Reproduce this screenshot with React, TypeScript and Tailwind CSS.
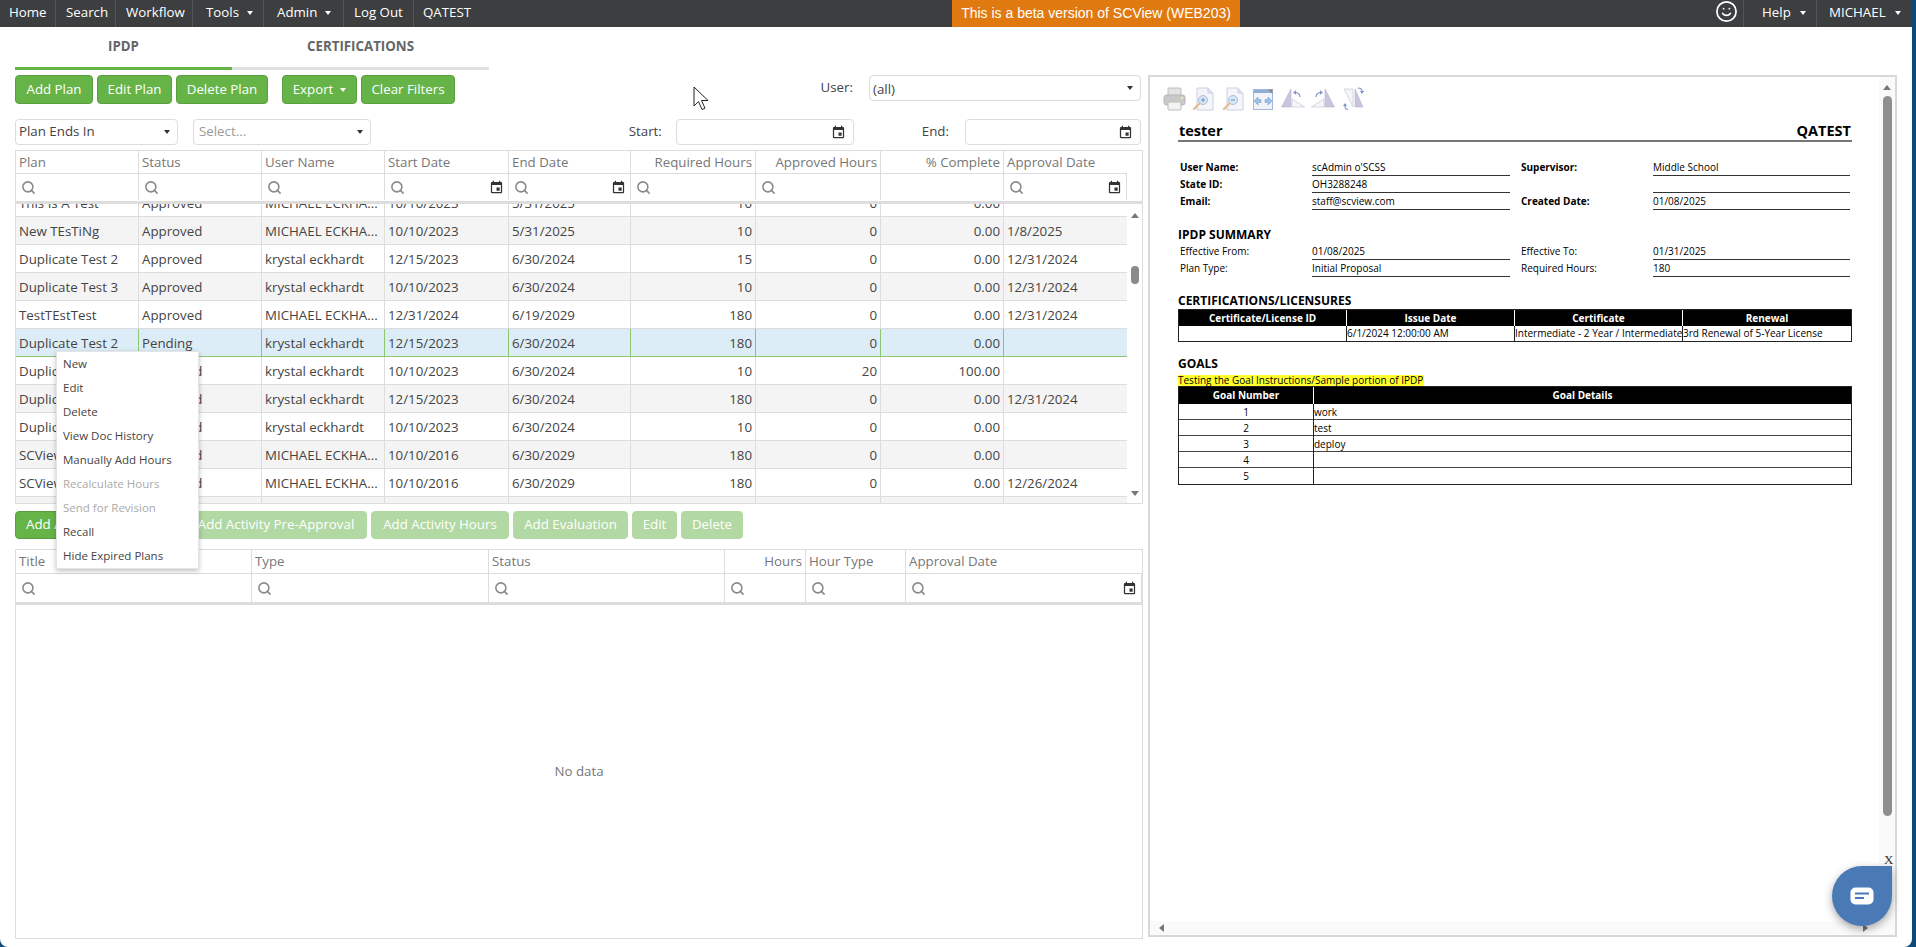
import { Search, Smile } from "lucide-react"
import { MdEvent } from "react-icons/md"

const planCols = "grid grid-cols-[123px_123px_123px_124px_122px_125px_125px_123px_123px]"
const activityCols = "grid grid-cols-[236px_237px_236px_81px_100px_1fr]"
const docCols = "grid grid-cols-[134px_198px_9px_134px_197px]"

type Row = {
  plan: string
  status: string
  user: string
  start: string
  end: string
  required: string
  approved: string
  pct: string
  date: string
}

const mk = "MICHAEL ECKHA..."
const ke = "krystal eckhardt"

const rows: Row[] = [
  { plan: "This Is A Test", status: "Approved", user: mk, start: "10/10/2023", end: "5/31/2025", required: "10", approved: "0", pct: "0.00", date: "" },
  { plan: "New TEsTiNg", status: "Approved", user: mk, start: "10/10/2023", end: "5/31/2025", required: "10", approved: "0", pct: "0.00", date: "1/8/2025" },
  { plan: "Duplicate Test 2", status: "Approved", user: ke, start: "12/15/2023", end: "6/30/2024", required: "15", approved: "0", pct: "0.00", date: "12/31/2024" },
  { plan: "Duplicate Test 3", status: "Approved", user: ke, start: "10/10/2023", end: "6/30/2024", required: "10", approved: "0", pct: "0.00", date: "12/31/2024" },
  { plan: "TestTEstTest", status: "Approved", user: mk, start: "12/31/2024", end: "6/19/2029", required: "180", approved: "0", pct: "0.00", date: "12/31/2024" },
  { plan: "Duplicate Test 2", status: "Pending", user: ke, start: "12/15/2023", end: "6/30/2024", required: "180", approved: "0", pct: "0.00", date: "" },
  { plan: "Duplicate Test 3", status: "Approved", user: ke, start: "10/10/2023", end: "6/30/2024", required: "10", approved: "20", pct: "100.00", date: "" },
  { plan: "Duplicate Test 2", status: "Approved", user: ke, start: "12/15/2023", end: "6/30/2024", required: "180", approved: "0", pct: "0.00", date: "12/31/2024" },
  { plan: "Duplicate Test 3", status: "Approved", user: ke, start: "10/10/2023", end: "6/30/2024", required: "10", approved: "0", pct: "0.00", date: "" },
  { plan: "SCView Test", status: "Approved", user: mk, start: "10/10/2016", end: "6/30/2029", required: "180", approved: "0", pct: "0.00", date: "" },
  { plan: "SCView Test", status: "Approved", user: mk, start: "10/10/2016", end: "6/30/2029", required: "180", approved: "0", pct: "0.00", date: "12/26/2024" },
  { plan: "", status: "", user: "", start: "", end: "", required: "", approved: "", pct: "", date: "" },
]

const menuItems = [
  { label: "New" },
  { label: "Edit" },
  { label: "Delete" },
  { label: "View Doc History" },
  { label: "Manually Add Hours" },
  { label: "Recalculate Hours", disabled: true },
  { label: "Send for Revision", disabled: true },
  { label: "Recall" },
  { label: "Hide Expired Plans" },
]

function Caret({ dark }: { dark?: boolean }) {
  return (
    <span
      className={`inline-block border-x-[3.5px] border-t-[4px] border-x-transparent ${
        dark ? "border-t-[#333]" : "border-t-white"
      }`}
    />
  )
}

function NavItem({ label, width, caret }: { label: string; width: string; caret?: boolean }) {
  return (
    <div className={`flex h-full items-center gap-[8px] border-r border-[#555] pb-[2px] ${width}`}>
      <span>{label}</span>
      {caret && <Caret />}
    </div>
  )
}

function GreenButton({ label, width, caret, faded }: { label: string; width: string; caret?: boolean; faded?: boolean }) {
  return (
    <button
      className={`flex items-center justify-center gap-[7px] rounded-[4px] border text-white ${width} ${
        faded ? "h-[28px] border-[#b2d8a3] bg-[#b2d8a3]" : "h-[29px] border-[#5a9f3e] bg-[#66b447]"
      }`}
    >
      {label}
      {caret && <Caret />}
    </button>
  )
}

function Box({ width, height, text, muted, icon, extra }: { width: string; height: string; text?: string; muted?: boolean; icon?: "caret" | "date"; extra?: string }) {
  return (
    <div className={`flex items-center justify-between rounded-[4px] border border-[#dcdcdc] pl-[3px] pr-[7px] ${width} ${height}`}>
      <span className={`${muted ? "pl-[2px] text-[#999]" : "text-[#444]"} ${extra ?? ""}`}>{text}</span>
      {icon === "caret" && <Caret dark />}
      {icon === "date" && <MdEvent className="text-[15px] text-[#333]" />}
    </div>
  )
}

function FilterCell({ date, empty }: { date?: boolean; empty?: boolean }) {
  return (
    <div className="flex h-full items-center justify-between border-r border-[#ddd] pl-[5px] pr-[4px]">
      {!empty && <Search size={15} strokeWidth={2.5} className="text-[#8a8a8a]" />}
      {date && <MdEvent className="text-[15px] text-[#333]" />}
    </div>
  )
}

function HeadCell({ label, right, last }: { label: string; right?: boolean; last?: boolean }) {
  return (
    <div className={`truncate px-[3px] leading-[23px] text-[#777] ${last ? "" : "border-r border-[#ddd]"} ${right ? "text-right" : ""}`}>
      {label}
    </div>
  )
}

function PlanRow({ row, index }: { row: Row; index: number }) {
  const selected = row.status === "Pending"
  const bg = selected ? "bg-[#dcedf7]" : index % 2 === 1 ? "bg-[#f4f4f4]" : "bg-white"
  const line = selected ? "border-[#8cc66f]" : "border-[#ddd]"
  const cell = `truncate h-full px-[3px] leading-[28px] border-r ${line}`
  return (
    <div className={`${planCols} h-[28px] border-b text-[#444] ${bg} ${selected ? "border-b-[#8cc66f]" : "border-b-[#ddd]"}`}>
      <div className={cell}>{row.plan}</div>
      <div className={cell}>{row.status}</div>
      <div className={cell}>{row.user}</div>
      <div className={cell}>{row.start}</div>
      <div className={cell}>{row.end}</div>
      <div className={`${cell} text-right`}>{row.required}</div>
      <div className={`${cell} text-right`}>{row.approved}</div>
      <div className={`${cell} text-right`}>{row.pct}</div>
      <div className="truncate h-full px-[3px] leading-[28px]">{row.date}</div>
    </div>
  )
}

function PlanTable() {
  return (
    <div className="mt-[5px] h-[354px] overflow-hidden border border-[#ddd]">
      <div className="flex h-[53px] border-b-[3px] border-[#ddd]">
        <div className="w-[1111px]">
          <div className={`${planCols} h-[23px] border-b border-[#ddd]`}>
            <HeadCell label="Plan" />
            <HeadCell label="Status" />
            <HeadCell label="User Name" />
            <HeadCell label="Start Date" />
            <HeadCell label="End Date" />
            <HeadCell label="Required Hours" right />
            <HeadCell label="Approved Hours" right />
            <HeadCell label="% Complete" right />
            <HeadCell label="Approval Date" last />
          </div>
          <div className={`${planCols} h-[26px]`}>
            <FilterCell />
            <FilterCell />
            <FilterCell />
            <FilterCell date />
            <FilterCell date />
            <FilterCell />
            <FilterCell />
            <FilterCell empty />
            <FilterCell date />
          </div>
        </div>
      </div>
      <div className="flex h-[300px]">
        <div className="h-full w-[1111px] overflow-hidden">
          <div className="-mt-[15px]">
            {rows.map((row, i) => (
              <PlanRow key={i} row={row} index={i} />
            ))}
          </div>
        </div>
        <ScrollRail />
      </div>
    </div>
  )
}

function ScrollRail() {
  return (
    <div className="flex h-full w-[15px] flex-col items-center justify-between pb-[8px] pt-[9px]">
      <span className="inline-block border-x-[4px] border-b-[5px] border-x-transparent border-b-[#777]" />
      <span className="mb-[198px] mt-[38px] h-[18px] w-[8px] rounded-full bg-[#8a8a8a]" />
      <span className="inline-block border-x-[4px] border-t-[5px] border-x-transparent border-t-[#777]" />
    </div>
  )
}

function ActivityTable() {
  return (
    <div className="mt-[10px] flex h-[390px] flex-col border border-[#ddd]">
      <div className="h-[55px] shrink-0 border-b-[3px] border-[#ddd]">
        <div className={`${activityCols} h-[24px] border-b border-[#ddd]`}>
          <HeadCell label="Title" />
          <HeadCell label="Type" />
          <HeadCell label="Status" />
          <HeadCell label="Hours" right />
          <HeadCell label="Hour Type" />
          <HeadCell label="Approval Date" last />
        </div>
        <div className={`${activityCols} h-[28px]`}>
          <FilterCell />
          <FilterCell />
          <FilterCell />
          <FilterCell />
          <FilterCell />
          <FilterCell date />
        </div>
      </div>
      <div className="flex flex-1 items-center justify-center text-[#777]">No data</div>
    </div>
  )
}

function ContextMenu() {
  return (
    <div className="absolute left-[56px] top-[351px] w-[143px] border border-[#e5e5e5] bg-white text-[11.5px] shadow-[0_2px_5px_rgba(0,0,0,0.25)]">
      {menuItems.map((item) => (
        <div key={item.label} className={`h-[24px] pl-[6px] leading-[24px] ${item.disabled ? "text-[#aaa]" : "text-[#444]"}`}>
          {item.label}
        </div>
      ))}
    </div>
  )
}

// PDF viewer toolbar glyphs
function PrinterIcon() {
  return (
    <svg width="23" height="24" viewBox="0 0 23 24">
      <rect x="5" y="1" width="13" height="8" rx="1" fill="#e3e3e3" stroke="#bdbdbd" />
      <rect x="1" y="8" width="21" height="10" rx="2.5" fill="#c9c9c9" stroke="#b5b5b5" />
      <rect x="5" y="15" width="13" height="8" rx="1" fill="#f3f3f3" stroke="#bdbdbd" />
      <circle cx="19" cy="11" r="1" fill="#f2f0b0" />
    </svg>
  )
}

function ZoomDocIcon({ minus }: { minus?: boolean }) {
  return (
    <svg width="22" height="24" viewBox="0 0 22 24">
      <path d="M5 1h11l5 5v17H5z" fill="#f4f5fb" stroke="#ccd0e2" />
      <path d="M16 1v5h5" fill="#dfe2f0" stroke="#ccd0e2" />
      <circle cx="11" cy="13" r="4.5" fill="#d7e6f7" stroke="#a8bfd9" />
      <path d={minus ? "M9 13h4" : "M9 13h4M11 11v4"} stroke="#7c9ccb" strokeWidth="1.2" />
      <path d="M7.5 16.5 2 22" stroke="#e8bd8f" strokeWidth="2.4" strokeLinecap="round" />
    </svg>
  )
}

function FitWidthIcon() {
  return (
    <svg width="20" height="23" viewBox="0 0 20 23">
      <rect x="0.5" y="1.5" width="19" height="20" fill="#f0f4fa" stroke="#9db9dc" />
      <rect x="1" y="2" width="18" height="3" fill="#90aed4" />
      <path d="M1 13l4-4v2.500h3v3H5V17zM19 13l-4-4v2.500h-3v3h3V17z" fill="#9cc0e6" stroke="#6f97c7" strokeWidth="0.5" />
      <path d="M15 1.500h4.500V6z" fill="#888" />
    </svg>
  )
}

function RotateIcon({ mirror }: { mirror?: boolean }) {
  return (
    <svg width="24" height="24" viewBox="0 0 24 24" className={mirror ? "-scale-x-100" : ""}>
      <path d="M10 2v18H0.500z" fill="#c9c5de" stroke="#b7b3d0" strokeWidth="0.6" />
      <path d="M11 20v-8l12.500 8z" fill="#f5f6fa" stroke="#c6c8d6" strokeWidth="0.7" />
      <path d="M19 10c0-3-2.500-4.500-5.500-4.500" fill="none" stroke="#7c92c4" strokeWidth="1.1" />
      <path d="M12 5.500l3-2.200v4.400z" fill="#7c92c4" />
    </svg>
  )
}

function FlipIcon() {
  return (
    <svg width="21" height="24" viewBox="0 0 21 24">
      <path d="M1 2h9v18z" fill="#f5f6fa" stroke="#c6c8d6" strokeWidth="0.7" />
      <path d="M12 2v18h8z" fill="#c9c5de" stroke="#b7b3d0" strokeWidth="0.6" />
      <path d="M15 1c2.500 0 4 1 4 3.500M5 22.500c-2 0-3-1-3-3.500" fill="none" stroke="#7c92c4" strokeWidth="1.1" />
      <path d="M19 7l-2-3h4zM2 16l-2 3h4z" fill="#7c92c4" />
    </svg>
  )
}

function Field({ label, value, bold }: { label: string; value?: string; bold?: boolean }) {
  return (
    <>
      <div className={`${bold ? "font-bold" : ""} pl-[2px] leading-[17px]`}>{label}</div>
      <div className="h-[17px] border-b border-[#333] leading-[17px]">{value}</div>
    </>
  )
}

function PdfDoc() {
  return (
    <div className="ml-[28px] w-[674px] text-[10px] text-black">
      <div className="mt-[8px] flex h-[23px] items-center justify-between border-b-2 border-[#777] px-[1px] pt-[3px] text-[14.5px] font-bold">
        <span>tester</span>
        <span>QATEST</span>
      </div>
      <div className={`mt-[17px] ${docCols}`}>
        <Field label="User Name:" value="scAdmin o'SCSS" bold />
        <div />
        <Field label="Supervisor:" value="Middle School" bold />
      </div>
      <div className={docCols}>
        <Field label="State ID:" value="OH3288248" bold />
        <div />
        <div />
        <div className="h-[17px] border-b border-[#333]" />
      </div>
      <div className={docCols}>
        <Field label="Email:" value="staff@scview.com" bold />
        <div />
        <Field label="Created Date:" value="01/08/2025" bold />
      </div>
      <div className="mt-[17px] text-[12px] font-bold leading-[16px]">IPDP SUMMARY</div>
      <div className={docCols}>
        <Field label="Effective From:" value="01/08/2025" />
        <div />
        <Field label="Effective To:" value="01/31/2025" />
        <Field label="Plan Type:" value="Initial Proposal" />
        <div />
        <Field label="Required Hours:" value="180" />
      </div>
      <div className="mt-[16px] text-[12px] font-bold leading-[16px]">CERTIFICATIONS/LICENSURES</div>
      <div className="border border-[#222]">
        <div className="grid h-[16px] grid-cols-4 bg-black text-center font-bold leading-[16px] text-white">
          <div className="border-r border-white">Certificate/License ID</div>
          <div className="border-r border-white">Issue Date</div>
          <div className="border-r border-white">Certificate</div>
          <div>Renewal</div>
        </div>
        <div className="grid h-[15px] grid-cols-4 whitespace-nowrap leading-[15px]">
          <div className="border-r border-[#222]" />
          <div className="border-r border-[#222]">6/1/2024 12:00:00 AM</div>
          <div className="overflow-hidden border-r border-[#222]">Intermediate - 2 Year / Intermediate</div>
          <div>3rd Renewal of 5-Year License</div>
        </div>
      </div>
      <div className="mt-[14px] text-[12px] font-bold leading-[16px]">GOALS</div>
      <div className="mt-[3px] w-fit bg-[#ffff2e] pr-[1px] leading-[11px]">Testing the Goal Instructions/Sample portion of IPDP</div>
      <div className="border border-[#222]">
        <div className="grid h-[17px] grid-cols-[135px_1fr] bg-black text-center font-bold leading-[17px] text-white">
          <div className="border-r border-white">Goal Number</div>
          <div>Goal Details</div>
        </div>
        {["work", "test", "deploy", "", ""].map((goal, i) => (
          <div key={i} className="grid h-[16px] grid-cols-[135px_1fr] border-b border-[#444] leading-[17px] last:border-b-0">
            <div className="border-r border-[#222] text-center">{i + 1}</div>
            <div>{goal}</div>
          </div>
        ))}
      </div>
    </div>
  )
}

function PdfPanel() {
  return (
    <div className="flex h-[862px] w-[749px] flex-col border-2 border-[#d8d8d8]">
      <div className="flex min-h-0 flex-1">
        <div className="flex-1">
          <div className="flex h-[24px] items-center pl-[13px] mt-[10px]">
            <PrinterIcon />
            <span className="w-[6px]" />
            <ZoomDocIcon />
            <span className="w-[8px]" />
            <ZoomDocIcon minus />
            <span className="w-[9px]" />
            <FitWidthIcon />
            <span className="w-[8px]" />
            <RotateIcon />
            <span className="w-[6px]" />
            <RotateIcon mirror />
            <span className="w-[8px]" />
            <FlipIcon />
          </div>
          <PdfDoc />
        </div>
        <div className="flex w-[16px] flex-col items-center bg-[#fafafa] pt-[8px]">
          <span className="inline-block border-x-[4px] border-b-[5px] border-x-transparent border-b-[#777]" />
          <span className="mt-[6px] h-[720px] w-[9px] rounded-full bg-[#8f8f8f]" />
        </div>
      </div>
      <div className="flex h-[14px] shrink-0 items-center justify-between bg-[#fafafa] pl-[9px] pr-[27px]">
        <span className="inline-block border-y-[4px] border-r-[5px] border-y-transparent border-r-[#777]" />
        <span className="inline-block border-y-[4px] border-l-[5px] border-y-transparent border-l-[#777]" />
      </div>
    </div>
  )
}

export default function App() {
  return (
    <div className="relative h-[947px] w-[1916px] overflow-hidden bg-[#0b4a7c] pr-[4px] font-['Open_Sans',sans-serif] text-[13.3px]">
      <div className="h-[947px] rounded-b-[8px] bg-white">
        {/* Top navigation */}
        <header className="flex h-[27px] bg-[#3d3e40] text-white">
          <div className="flex w-[952px] pl-[9px]">
            <NavItem label="Home" width="w-[47px]" />
            <NavItem label="Search" width="w-[60px] pl-[10px]" />
            <NavItem label="Workflow" width="w-[77px] pl-[10px]" />
            <NavItem label="Tools" width="w-[71px] pl-[13px]" caret />
            <NavItem label="Admin" width="w-[80px] pl-[13px]" caret />
            <NavItem label="Log Out" width="w-[70px] pl-[10px]" />
            <div className="flex h-full items-center pb-[1px] pl-[9px]">QATEST</div>
          </div>
          <div className="flex w-[288px] items-center justify-center bg-[#e07a10] pb-[1px] font-['Liberation_Sans',sans-serif] text-[14px]">
            This is a beta version of SCView (WEB203)
          </div>
          <div className="flex flex-1 justify-end">
            <div className="flex h-full w-[34px] items-center justify-center border-r border-[#555] pb-[5px]">
              <Smile size={23} strokeWidth={1.8} />
            </div>
            <div className="flex h-full w-[73px] items-center gap-[9px] border-r border-[#555] pb-[2px] pl-[18px]">
              Help <Caret />
            </div>
            <div className="flex h-full w-[95px] items-center gap-[9px] pb-[2px] pl-[12px]">
              MICHAEL <Caret />
            </div>
          </div>
        </header>

        {/* Tabs */}
        <div className="ml-[15px] flex h-[43px] w-[474px] border-b-[3px] border-[#dfdfdf] text-center font-bold text-[#666]">
          <div className="-mb-[3px] w-[217px] border-b-[3px] border-[#66b447] pt-[10px]">IPDP</div>
          <div className="w-[257px] pt-[10px]">CERTIFICATIONS</div>
        </div>

        <div className="mt-[5px] flex gap-[5px] pl-[15px]">
          <div className="w-[1128px]">
            {/* Plan actions and user filter */}
            <div className="flex h-[29px]">
              <div className="flex gap-[4px]">
                <GreenButton label="Add Plan" width="w-[78px]" />
                <GreenButton label="Edit Plan" width="w-[75px]" />
                <GreenButton label="Delete Plan" width="w-[92px]" />
              </div>
              <div className="ml-[14px] flex gap-[4px]">
                <GreenButton label="Export" width="w-[75px]" caret />
                <GreenButton label="Clear Filters" width="w-[94px]" />
              </div>
              <div className="ml-auto mr-[2px] flex">
                <span className="mr-[16px] pt-[3px] text-[#444]">User:</span>
                <Box width="w-[272px]" height="h-[26px]" text="(all)" icon="caret" extra="pt-[3px]" />
              </div>
            </div>

            {/* Date range filters */}
            <div className="mt-[15px] flex items-center pr-[2px] text-[#444]">
              <Box width="w-[163px]" height="h-[26px]" text="Plan Ends In" icon="caret" />
              <div className="ml-[15px]">
                <Box width="w-[178px]" height="h-[26px]" text="Select..." muted icon="caret" />
              </div>
              <span className="ml-auto mr-[14px]">Start:</span>
              <Box width="w-[178px]" height="h-[26px]" icon="date" />
              <span className="ml-[68px] mr-[16px]">End:</span>
              <Box width="w-[176px]" height="h-[26px]" icon="date" />
            </div>

            <PlanTable />

            {/* Activity actions */}
            <div className="mt-[7px] flex gap-[4px]">
              <GreenButton label="Add Activity" width="w-[166px] !h-[28px] !justify-start pl-[10px]" />
              <GreenButton label="Add Activity Pre-Approval" width="w-[182px]" faded />
              <GreenButton label="Add Activity Hours" width="w-[138px]" faded />
              <GreenButton label="Add Evaluation" width="w-[115px]" faded />
              <GreenButton label="Edit" width="w-[45px]" faded />
              <GreenButton label="Delete" width="w-[62px]" faded />
            </div>

            <ActivityTable />
          </div>
          <PdfPanel />
        </div>
      </div>

      <ContextMenu />

      {/* Mouse pointer caught in the screenshot */}
      <svg className="absolute left-[693px] top-[86px]" width="17" height="25" viewBox="0 0 17 25">
        <path d="M1 1v19l4.500-4.500 3.500 8 3-1.300-3.500-7.700H15z" fill="#fff" stroke="#222" strokeWidth="1" />
      </svg>

      <span className="absolute left-[1884px] top-[850px] font-['Liberation_Serif',serif] text-[13px] text-[#333]">X</span>

      {/* Chat launcher */}
      <div className="absolute left-[1832px] top-[866px] flex h-[60px] w-[60px] items-center justify-center rounded-full rounded-tr-[6px] bg-[#4a7ab5] shadow-[0_3px_8px_rgba(0,0,0,0.35)]">
        <svg width="24" height="18" viewBox="0 0 24 18">
          <rect x="0.500" y="0.500" width="23" height="17" rx="5" fill="#fff" />
          <path d="M5 6.500h14M5 11h9" stroke="#4a7ab5" strokeWidth="1.800" />
        </svg>
      </div>
    </div>
  )
}
